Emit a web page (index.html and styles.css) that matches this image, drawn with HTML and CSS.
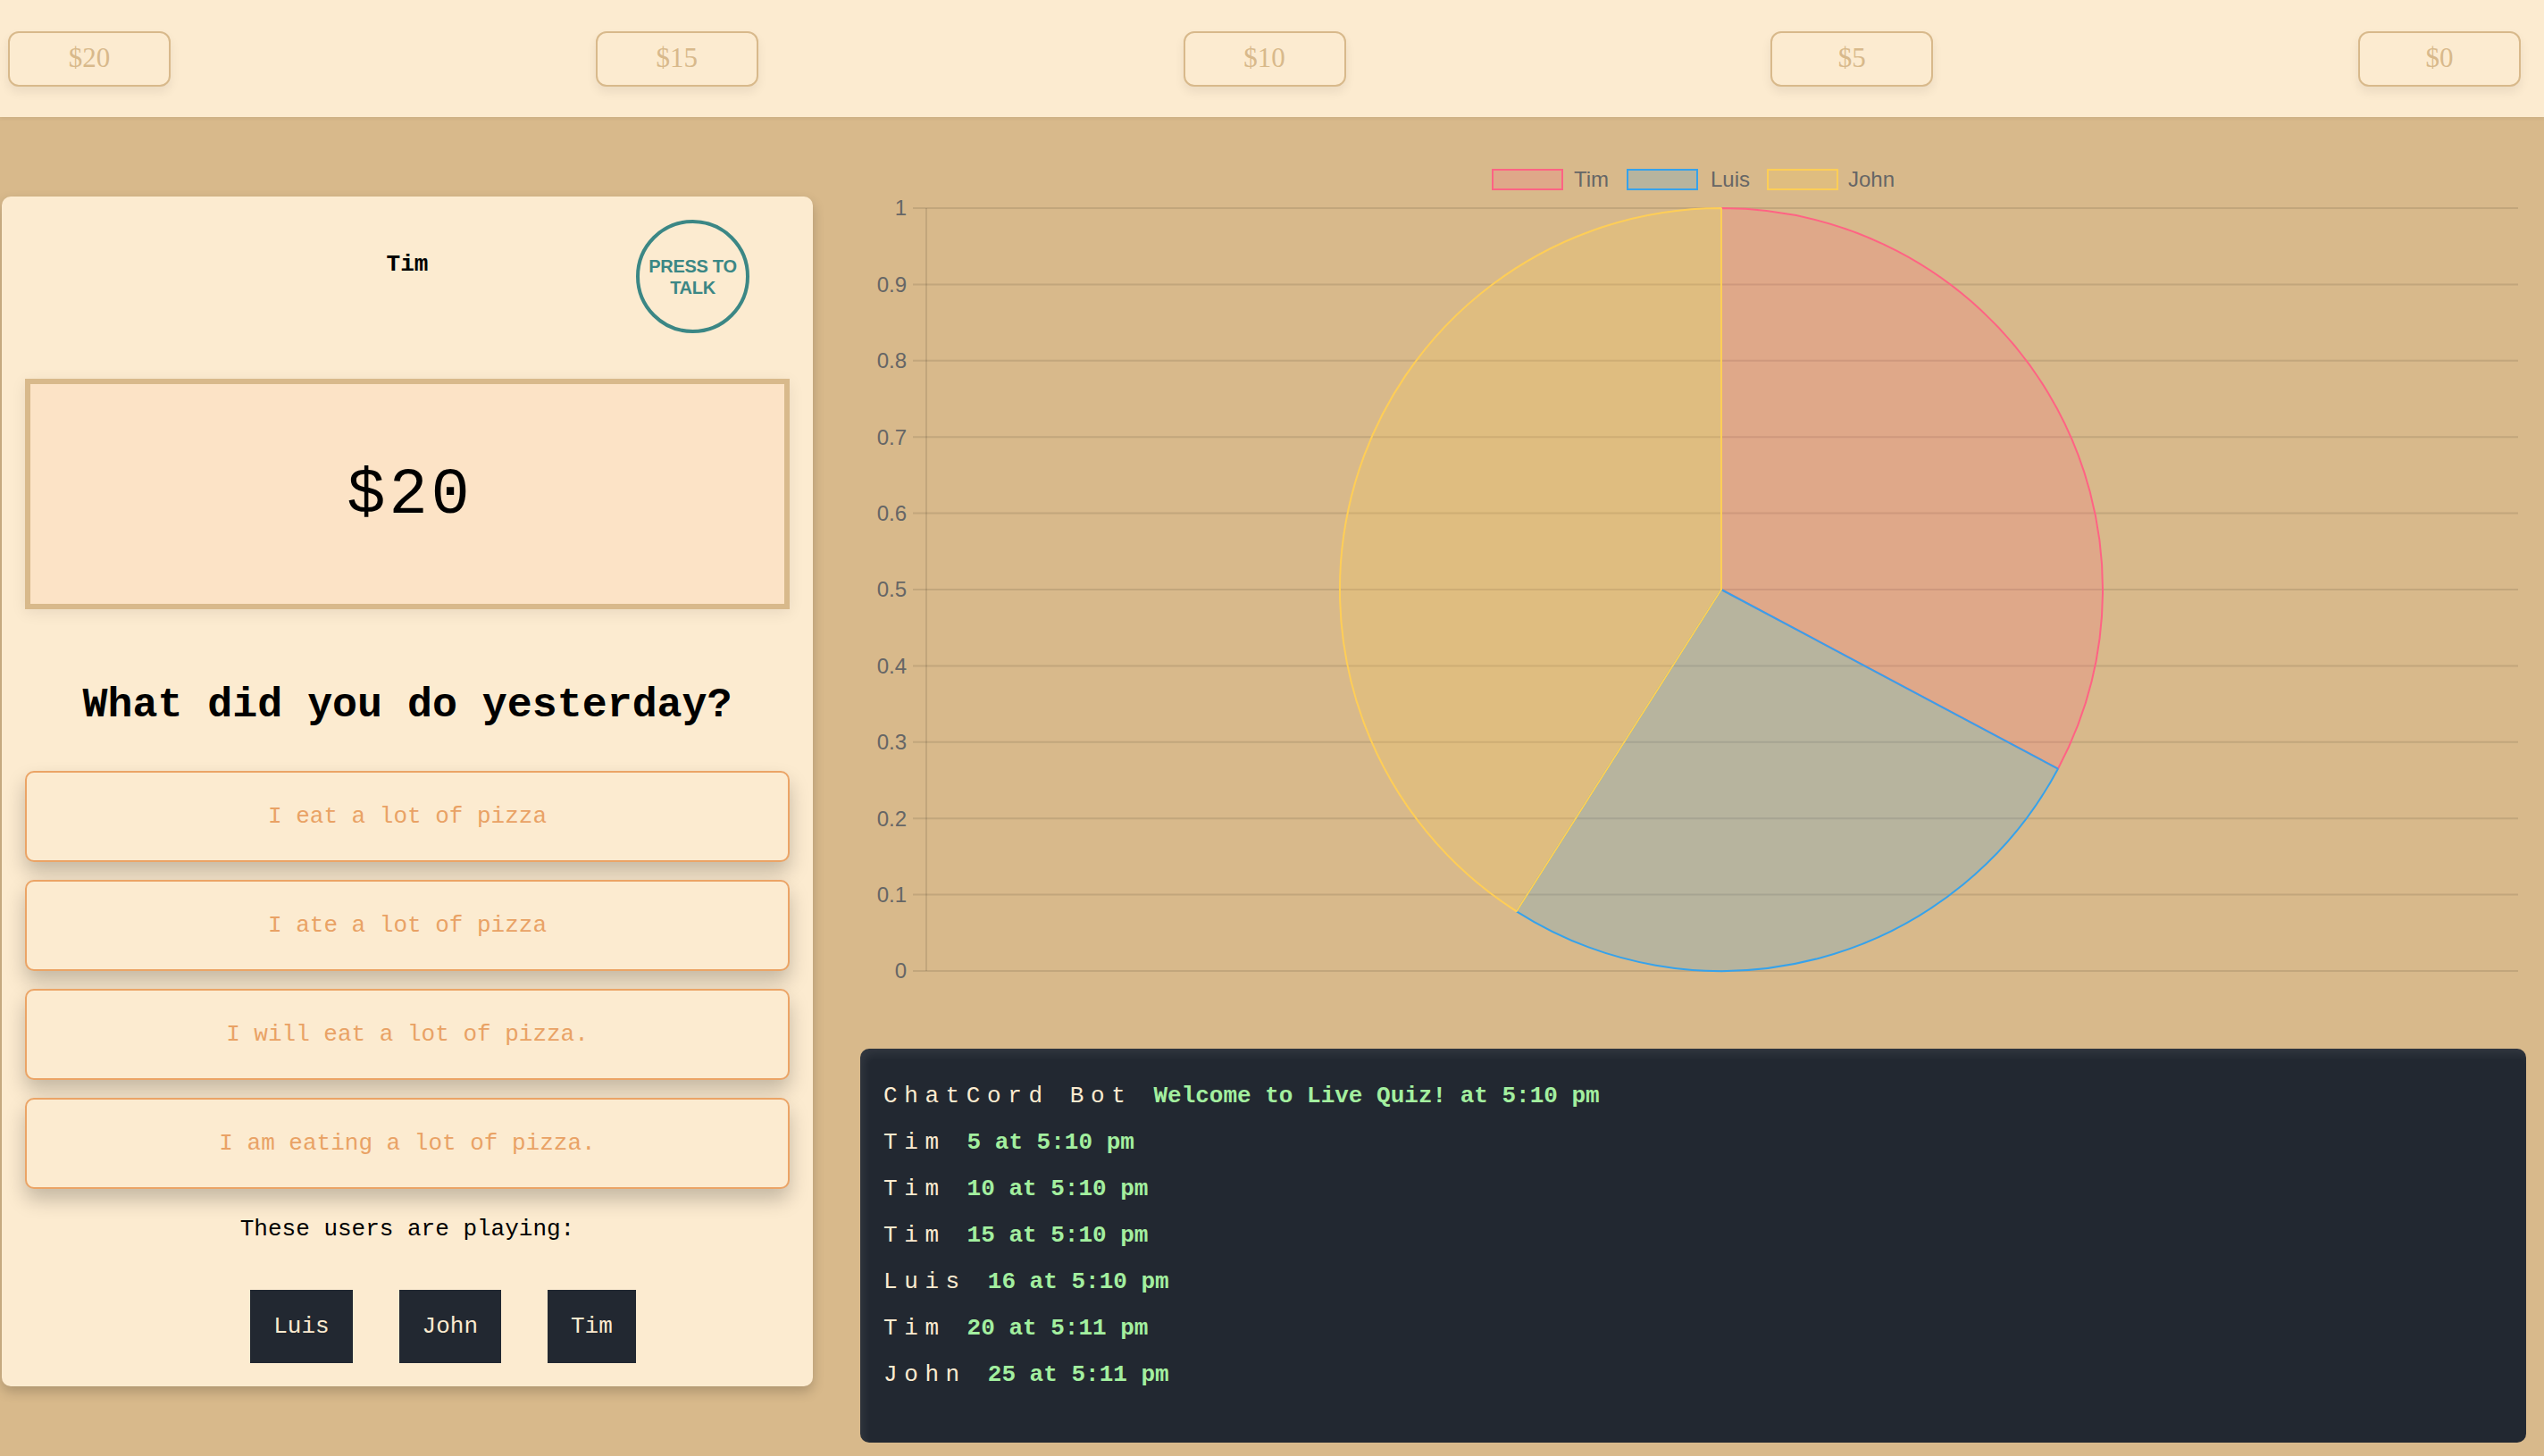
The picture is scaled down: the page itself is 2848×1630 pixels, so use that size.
FILE: index.html
```html
<!DOCTYPE html>
<html lang="en">
<head>
<meta charset="utf-8">
<title>Live Quiz</title>
<link rel="stylesheet" href="styles.css">
</head>
<body>
<header class="price-bar">
  <button class="price">$20</button>
  <button class="price">$15</button>
  <button class="price">$10</button>
  <button class="price">$5</button>
  <button class="price">$0</button>
</header>
<main class="layout">
  <section class="card">
    <div class="card-head">
      <span class="player-name">Tim</span>
      <button class="talk">PRESS TO<br>TALK</button>
    </div>
    <div class="money">$20</div>
    <h2 class="question">What did you do yesterday?</h2>
    <div class="answers">
      <button class="answer">I eat a lot of pizza</button>
      <button class="answer">I ate a lot of pizza</button>
      <button class="answer">I will eat a lot of pizza.</button>
      <button class="answer">I am eating a lot of pizza.</button>
    </div>
    <p class="players-title">These users are playing:</p>
    <ul class="players">
      <li class="chip">Luis</li>
      <li class="chip">John</li>
      <li class="chip">Tim</li>
    </ul>
  </section>
  <section class="right">
    <svg class="chart" width="1865" height="1043" viewBox="0 0 1865 1043">
      <g class="legend">
        <rect x="708" y="59" width="78" height="22" fill="rgba(255,99,132,0.2)" stroke="rgb(255,99,132)" stroke-width="2"/>
        <text x="799" y="72">Tim</text>
        <rect x="859" y="59" width="78" height="22" fill="rgba(54,162,235,0.2)" stroke="rgb(54,162,235)" stroke-width="2"/>
        <text x="952" y="72">Luis</text>
        <rect x="1016" y="59" width="78" height="22" fill="rgba(255,206,86,0.2)" stroke="rgb(255,206,86)" stroke-width="2"/>
        <text x="1106" y="72">John</text>
      </g>
      <g class="grid" stroke="rgba(0,0,0,0.1)" stroke-width="2">
        <line x1="59" y1="102" x2="1856" y2="102"/>
        <line x1="59" y1="187.4" x2="1856" y2="187.4"/>
        <line x1="59" y1="272.8" x2="1856" y2="272.8"/>
        <line x1="59" y1="358.2" x2="1856" y2="358.2"/>
        <line x1="59" y1="443.6" x2="1856" y2="443.6"/>
        <line x1="59" y1="529" x2="1856" y2="529"/>
        <line x1="59" y1="614.4" x2="1856" y2="614.4"/>
        <line x1="59" y1="699.8" x2="1856" y2="699.8"/>
        <line x1="59" y1="785.2" x2="1856" y2="785.2"/>
        <line x1="59" y1="870.6" x2="1856" y2="870.6"/>
        <line x1="59" y1="956" x2="1856" y2="956"/>
        <line x1="74" y1="102" x2="74" y2="956"/>
      </g>
      <g class="ticks">
        <text x="52" y="104">1</text>
        <text x="52" y="189.4">0.9</text>
        <text x="52" y="274.8">0.8</text>
        <text x="52" y="360.2">0.7</text>
        <text x="52" y="445.6">0.6</text>
        <text x="52" y="531">0.5</text>
        <text x="52" y="616.4">0.4</text>
        <text x="52" y="701.8">0.3</text>
        <text x="52" y="787.2">0.2</text>
        <text x="52" y="872.6">0.1</text>
        <text x="52" y="958">0</text>
      </g>
      <g class="pie" stroke-width="2" stroke-linejoin="bevel">
        <path d="M964,529 L964,102 A427,427 0 0 1 1340.9,729.7 Z" fill="rgba(255,99,132,0.2)" stroke="rgb(255,99,132)"/>
        <path d="M964,529 L1340.9,729.7 A427,427 0 0 1 734.8,889.3 Z" fill="rgba(54,162,235,0.2)" stroke="rgb(54,162,235)"/>
        <path d="M964,529 L734.8,889.3 A427,427 0 0 1 964,102 Z" fill="rgba(255,206,86,0.2)" stroke="rgb(255,206,86)"/>
      </g>
    </svg>
    <div class="chat">
      <p class="msg"><span class="who">ChatCord Bot</span><span class="text">Welcome to Live Quiz! at 5:10 pm</span></p>
      <p class="msg"><span class="who">Tim</span><span class="text">5 at 5:10 pm</span></p>
      <p class="msg"><span class="who">Tim</span><span class="text">10 at 5:10 pm</span></p>
      <p class="msg"><span class="who">Tim</span><span class="text">15 at 5:10 pm</span></p>
      <p class="msg"><span class="who">Luis</span><span class="text">16 at 5:10 pm</span></p>
      <p class="msg"><span class="who">Tim</span><span class="text">20 at 5:11 pm</span></p>
      <p class="msg"><span class="who">John</span><span class="text">25 at 5:11 pm</span></p>
    </div>
  </section>
</main>
</body>
</html>
```

FILE: styles.css
```css
* { box-sizing: border-box; }

html, body {
  margin: 0;
  padding: 0;
}

body {
  background: #d8b98b;
  font-family: "Courier New", "Liberation Mono", monospace;
  color: #000;
  height: 1630px;
  overflow: hidden;
}

/* ---------- top price bar ---------- */
.price-bar {
  height: 131px;
  background: #fcebd0;
  display: flex;
  align-items: center;
  justify-content: space-between;
  padding: 0 26px 0 9px;
  box-shadow: 0 2px 4px rgba(0, 0, 0, 0.06);
}

.price {
  width: 182px;
  height: 62px;
  background: #fcebd0;
  border: 2px solid #d8b98b;
  border-radius: 12px;
  color: #d8b98b;
  font-family: "Liberation Serif", "Times New Roman", serif;
  font-size: 31px;
  line-height: 56px;
  padding: 0 0 2px;
  box-shadow: 0 6px 12px rgba(0, 0, 0, 0.07);
}

/* ---------- layout ---------- */
.layout {
  display: flex;
  align-items: flex-start;
  gap: 53px;
  padding: 0 20px 0 2px;
}

/* ---------- left card ---------- */
.card {
  width: 908px;
  margin-top: 89px;
  background: #fcebd0;
  border-radius: 10px;
  padding: 26px;
  box-shadow: 0 6px 14px rgba(0, 0, 0, 0.2);
  display: flex;
  flex-direction: column;
}

.card-head {
  display: grid;
  grid-template-columns: 1fr auto 1fr;
  height: 127px;
}

.player-name {
  grid-column: 2;
  font-weight: bold;
  font-size: 26px;
  line-height: 30px;
  padding-top: 35px;
}

.talk {
  grid-column: 3;
  justify-self: end;
  margin-right: 45px;
  width: 127px;
  height: 127px;
  border-radius: 50%;
  border: 4px solid #3b8785;
  background: transparent;
  color: #3b8785;
  font-family: "Liberation Sans", Arial, sans-serif;
  font-weight: bold;
  font-size: 20px;
  line-height: 24px;
  padding: 0;
  letter-spacing: -0.3px;
}

.money {
  margin-top: 51px;
  height: 258px;
  border: 6px solid #d8b98b;
  background: #fce3c6;
  display: flex;
  align-items: center;
  justify-content: center;
  padding: 4px 0 0 6px;
  font-family: "Liberation Mono", "DejaVu Sans Mono", monospace;
  font-size: 72px;
  letter-spacing: 4px;
  box-shadow: 0 4px 16px rgba(0, 0, 0, 0.08);
}

.question {
  margin: 80px 0 0;
  font-size: 46.6px;
  line-height: 56px;
  font-weight: bold;
  text-align: center;
}

.answers {
  margin-top: 45px;
  display: flex;
  flex-direction: column;
  gap: 20px;
}

.answer {
  height: 102px;
  background: #fcebd0;
  border: 2px solid #eba466;
  border-radius: 10px;
  color: #e9a265;
  font-family: "Courier New", "Liberation Mono", monospace;
  font-size: 26px;
  box-shadow: 0 12px 22px rgba(0, 0, 0, 0.22);
}

.players-title {
  margin: 30px 0 0;
  text-align: center;
  font-size: 26px;
  line-height: 30px;
}

.players {
  list-style: none;
  margin: 53px 0 0;
  padding: 0 0 0 80px;
  display: flex;
  justify-content: center;
  gap: 52px;
}

.chip {
  background: #222831;
  color: #fcebd0;
  font-size: 26px;
  line-height: 82px;
  padding: 0 26px;
}

/* ---------- right column ---------- */
.right {
  flex: 1;
  display: flex;
  flex-direction: column;
}

.chart {
  display: block;
}

.legend text,
.ticks text {
  font-family: "Liberation Sans", Arial, sans-serif;
  font-size: 24px;
  fill: #666;
  dominant-baseline: middle;
}

.ticks text {
  text-anchor: end;
}

.chat {
  height: 441px;
  background: #222831;
  border-radius: 10px;
  padding: 27px 26px;
  box-shadow: inset 4px 6px 10px rgba(255, 255, 255, 0.07);
}

.msg {
  margin: 0;
  font-size: 26px;
  line-height: 52px;
  white-space: nowrap;
}

.who {
  color: #fcebd0;
  letter-spacing: 7.6px;
  margin-right: 24px;
}

.text {
  color: #a3ef9f;
  font-weight: bold;
}
```
